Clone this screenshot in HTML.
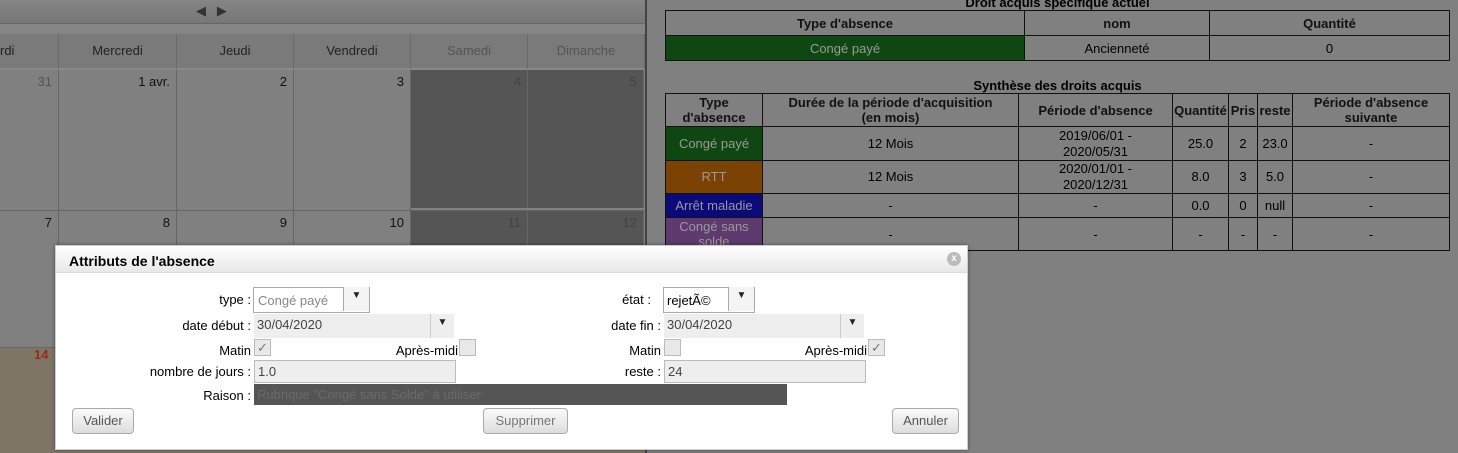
<!DOCTYPE html>
<html><head><meta charset="utf-8"><style>
*{box-sizing:border-box;margin:0;padding:0}
body{width:1458px;height:453px;overflow:hidden;background:#808080;font-family:"Liberation Sans",sans-serif;font-size:13px;color:#000;position:relative}
.a{position:absolute}
.nav{left:0;top:0;width:645px;height:24px;background:linear-gradient(#858585,#777);border-bottom:1px solid #666}
.hdr{top:34px;height:36px;background:#7a7a7a;border-right:1px solid #6a6a6a;text-align:center;line-height:34px;color:#222;border-bottom:2px solid #888}
.cell{border-right:1px solid #666;text-align:right;padding:4px 6px;color:#111}
.we{background:#555 !important;color:#444}
table{border-collapse:collapse;position:absolute;font-size:13px;table-layout:fixed}
td,th{border:1px solid #111;text-align:center;padding:0}
th{font-weight:bold;color:#111}
.t{position:absolute;font-weight:bold;text-align:center}
.dlg{left:55px;top:245px;width:913px;height:205px;background:#fff;border:1px solid #ccc;box-shadow:0 0 4px rgba(0,0,0,.4)}
.tb{left:0;top:0;width:911px;height:27px;background:linear-gradient(#fff,#e8e8e8);border-bottom:1px solid #ddd;font-weight:bold;font-size:14px;padding:7px 13px}
.lbl{text-align:right;width:200px}
.inp{border:1px solid #bbb;background:#eee;color:#444;padding:3px 3px}
.btn{border:1px solid #aaa;border-radius:4px;background:linear-gradient(#fafafa,#ddd);color:#555;text-align:center;line-height:24px;height:26px}
.cb{width:17px;height:17px;border:1px solid #bbb;background:#e8e8e8;font-size:13px;line-height:15px;text-align:center;color:#777}
.arr{font-size:10px}
</style></head><body>
<div class="a nav"><span class="a" style="left:196px;top:3px;color:#333;font-size:13px">◀ &nbsp; ▶</span></div>
<div class="a" style="left:0;top:24px;width:645px;height:10px;background:#858585"></div>
<div class="a" style="left:645px;top:0;width:2px;height:453px;background:#444"></div>
<div class="a hdr" style="left:0;width:59px;text-align:left">rdi</div>
<div class="a hdr" style="left:59px;width:118px">Mercredi</div>
<div class="a hdr" style="left:177px;width:117px">Jeudi</div>
<div class="a hdr" style="left:294px;width:117px">Vendredi</div>
<div class="a hdr" style="left:411px;width:117px;color:#555">Samedi</div>
<div class="a hdr" style="left:528px;width:117px;color:#555">Dimanche</div>
<div class="a cell" style="left:0;top:70px;width:59px;height:140px;color:#555">31</div>
<div class="a cell" style="left:59px;top:70px;width:118px;height:140px">1 avr.</div>
<div class="a cell" style="left:177px;top:70px;width:117px;height:140px">2</div>
<div class="a cell" style="left:294px;top:70px;width:117px;height:140px">3</div>
<div class="a cell we" style="left:411px;top:70px;width:117px;height:138px">4</div>
<div class="a cell we" style="left:528px;top:70px;width:116px;height:138px">5</div>
<div class="a" style="left:0;top:210px;width:645px;height:1px;background:#666"></div>
<div class="a cell" style="left:0;top:211px;width:59px;height:136px">7</div>
<div class="a cell" style="left:59px;top:211px;width:118px;height:136px">8</div>
<div class="a cell" style="left:177px;top:211px;width:117px;height:136px">9</div>
<div class="a cell" style="left:294px;top:211px;width:117px;height:136px">10</div>
<div class="a cell we" style="left:411px;top:211px;width:117px;height:136px">11</div>
<div class="a cell we" style="left:528px;top:211px;width:116px;height:136px">12</div>
<div class="a" style="left:0;top:347px;width:645px;height:106px;background:#7f7565;border-top:1px solid #666"></div>
<div class="a" style="left:34px;top:347px;color:#9a2a1a;font-weight:bold">14</div>

<div class="t" style="left:665px;top:-5px;width:785px">Droit acquis spécifique actuel</div>
<table style="left:665px;top:10px;width:785px">
<col style="width:359px"><col><col style="width:240px">
<tr style="height:25px"><th>Type d'absence</th><th>nom</th><th>Quantité</th></tr>
<tr style="height:25px"><td style="background:#0f4712;color:#999">Congé payé</td><td>Ancienneté</td><td>0</td></tr>
</table>
<div class="t" style="left:665px;top:78px;width:785px">Synthèse des droits acquis</div>
<table style="left:665px;top:93px;width:785px">
<col style="width:97px"><col style="width:256px"><col style="width:154px"><col style="width:56px"><col style="width:29px"><col style="width:35px"><col>
<tr style="height:33px;line-height:15px"><th>Type<br>d'absence</th><th>Durée de la période d'acquisition<br>(en mois)</th><th>Période d'absence</th><th>Quantité</th><th>Pris</th><th>reste</th><th>Période d'absence<br>suivante</th></tr>
<tr style="height:34px;line-height:16px"><td style="background:#0f4712;color:#999">Congé payé</td><td>12 Mois</td><td>2019/06/01 -<br>2020/05/31</td><td>25.0</td><td>2</td><td>23.0</td><td>-</td></tr>
<tr style="height:33px;line-height:16px"><td style="background:#7a4303;color:#999">RTT</td><td>12 Mois</td><td>2020/01/01 -<br>2020/12/31</td><td>8.0</td><td>3</td><td>5.0</td><td>-</td></tr>
<tr style="height:24px"><td style="background:#0a0a7a;color:#999">Arrêt maladie</td><td>-</td><td>-</td><td>0.0</td><td>0</td><td>null</td><td>-</td></tr>
<tr style="height:33px;line-height:15px"><td style="background:#5f3a6f;color:#999">Congé sans<br>solde</td><td>-</td><td>-</td><td>-</td><td>-</td><td>-</td><td>-</td></tr>
</table>

<div class="a dlg">
<div class="a tb">Attributs de l'absence</div>
<div class="a" style="left:891px;top:6px;width:14px;height:14px;border-radius:7px;background:#bbb;color:#fff;font-size:10px;text-align:center;line-height:14px;font-weight:bold">x</div>
<div class="a lbl" style="left:-5px;top:46px">type :</div>
<div class="a" style="left:197px;top:41px;width:117px;height:26px;border:1px solid #aaa;color:#888;padding:5px 4px">Congé payé<span class="a arr" style="left:89px;top:-1px;width:26px;height:24px;border-left:1px solid #aaa;background:#f4f4f4;color:#222;text-align:center;line-height:18px">▼</span></div>
<div class="a lbl" style="left:395px;top:46px">état :</div>
<div class="a" style="left:607px;top:41px;width:92px;height:26px;border:1px solid #aaa;padding:5px 3px">rejetÃ©<span class="a arr" style="left:64px;top:-1px;width:26px;height:24px;border-left:1px solid #aaa;background:#f4f4f4;color:#222;text-align:center;line-height:18px">▼</span></div>
<div class="a lbl" style="left:-5px;top:72px">date début :</div>
<div class="a inp" style="left:198px;top:68px;width:200px;height:24px;border:none">30/04/2020<span class="a arr" style="left:176px;top:0;width:24px;height:24px;border-left:1px solid #ccc;color:#222;text-align:center;line-height:18px">▼</span></div>
<div class="a lbl" style="left:405px;top:72px">date fin :</div>
<div class="a inp" style="left:608px;top:68px;width:200px;height:24px;border:none">30/04/2020<span class="a arr" style="left:176px;top:0;width:24px;height:24px;border-left:1px solid #ccc;color:#222;text-align:center;line-height:18px">▼</span></div>
<div class="a lbl" style="left:-5px;top:97px">Matin</div><div class="a cb" style="left:198px;top:93px">✓</div>
<div class="a lbl" style="left:202px;top:97px">Après-midi</div><div class="a cb" style="left:403px;top:93px"></div>
<div class="a lbl" style="left:405px;top:97px">Matin</div><div class="a cb" style="left:608px;top:93px"></div>
<div class="a lbl" style="left:611px;top:97px">Après-midi</div><div class="a cb" style="left:812px;top:93px">✓</div>
<div class="a lbl" style="left:-5px;top:118px">nombre de jours :</div>
<div class="a inp" style="left:198px;top:114px;width:202px;height:23px">1.0</div>
<div class="a lbl" style="left:405px;top:118px">reste :</div>
<div class="a inp" style="left:608px;top:114px;width:202px;height:23px">24</div>
<div class="a lbl" style="left:-5px;top:142px">Raison :</div>
<div class="a" style="left:198px;top:138px;width:533px;height:21px;background:#555;color:#6a6a6a;padding:3px 3px">Rubrique "Congé sans Solde" à utiliser</div>
<div class="a btn" style="left:16px;top:162px;width:62px">Valider</div>
<div class="a btn" style="left:427px;top:162px;width:85px;color:#777">Supprimer</div>
<div class="a btn" style="left:836px;top:162px;width:67px">Annuler</div>
</div>
</body></html>
